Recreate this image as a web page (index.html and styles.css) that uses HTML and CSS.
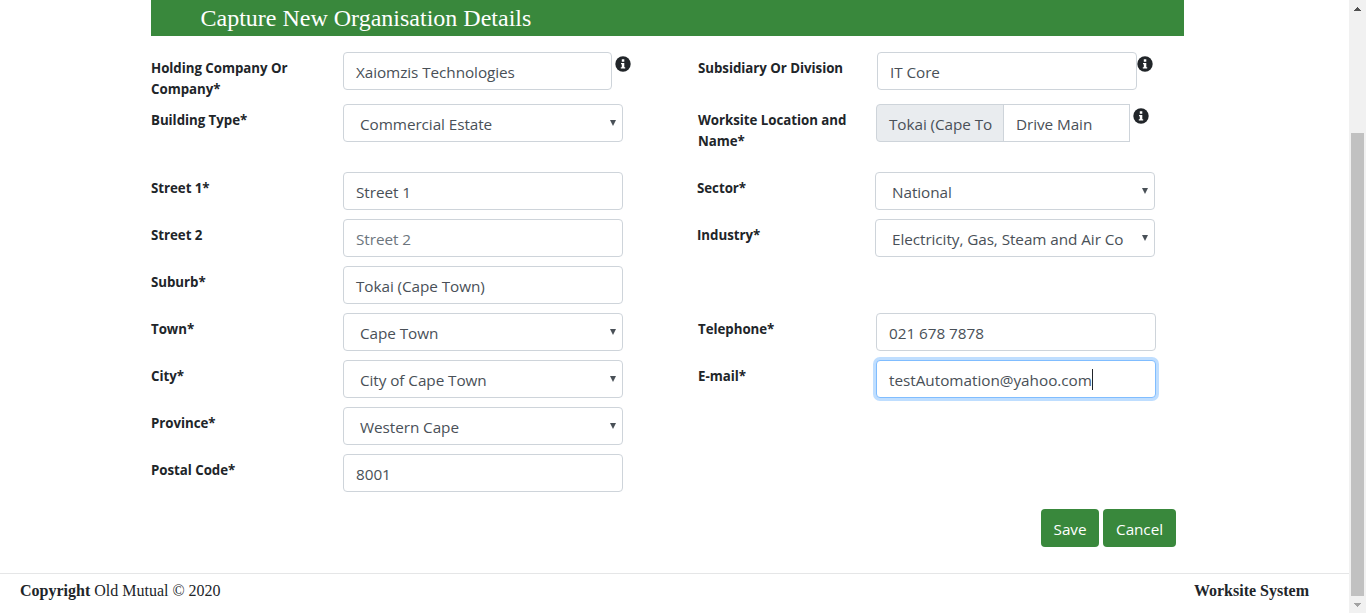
FILE: index.html
```html
<!DOCTYPE html>
<html lang="en">
<head>
<meta charset="utf-8">
<title>Capture New Organisation Details</title>
<link rel="stylesheet" href="styles.css">
</head>
<body>
<svg class="defs" width="0" height="0"><symbol id="info" viewBox="0 0 16 16"><circle cx="8" cy="8" r="7.7" fill="#212529"/><path fill="#fff" d="M6.8 3.3h2.5v2.4H6.8zM6 6.9h3.3v4.3h.9v1.4H5.8v-1.4h1V8.2H6z"/></symbol></svg>
<div class="page">
<main class="content">
<h1 class="title"><span>Capture New Organisation Details</span></h1>
<form class="form">
<label class="label"><span>Holding Company Or</span><br><span>Company*</span></label>
<div class="cell"><div class="field holding"><span>Xaiomzis Technologies</span></div><svg class="info"><use href="#info"/></svg></div>
<label class="label"><span>Subsidiary Or Division</span></label>
<div class="cell sub"><div class="field subsidiary"><span>IT Core</span></div><svg class="info tight"><use href="#info"/></svg></div>

<label class="label"><span>Building Type*</span></label>
<div class="cell"><div class="field select"><span>Commercial Estate</span><i class="arrow"></i></div></div>
<label class="label"><span>Worksite Location and</span><br><span>Name*</span></label>
<div class="cell"><div class="field prefix"><span>Tokai (Cape To</span></div><div class="field suffix"><span>Drive Main</span></div><svg class="info"><use href="#info"/></svg></div>

<label class="label"><span>Street 1*</span></label>
<div class="cell"><div class="field"><span>Street 1</span></div></div>
<label class="label shift"><span>Sector*</span></label>
<div class="cell shift"><div class="field select"><span>National</span><i class="arrow"></i></div></div>

<label class="label"><span>Street 2</span></label>
<div class="cell"><div class="field placeholder"><span>Street 2</span></div></div>
<label class="label shift"><span>Industry*</span></label>
<div class="cell shift"><div class="field select"><span>Electricity, Gas, Steam and Air Co</span><i class="arrow"></i></div></div>

<label class="label start"><span>Suburb*</span></label>
<div class="cell"><div class="field"><span>Tokai (Cape Town)</span></div></div>

<label class="label start"><span>Town*</span></label>
<div class="cell"><div class="field select"><span>Cape Town</span><i class="arrow"></i></div></div>
<label class="label"><span>Telephone*</span></label>
<div class="cell"><div class="field digits"><span>021 678 7878</span></div></div>

<label class="label"><span>City*</span></label>
<div class="cell"><div class="field select"><span>City of Cape Town</span><i class="arrow"></i></div></div>
<label class="label"><span>E-mail*</span></label>
<div class="cell"><div class="field focused"><span>testAutomation@yahoo.com</span><i class="caret"></i></div></div>

<label class="label start"><span>Province*</span></label>
<div class="cell"><div class="field select"><span>Western Cape</span><i class="arrow"></i></div></div>

<label class="label start"><span>Postal Code*</span></label>
<div class="cell"><div class="field digits"><span>8001</span></div></div>
</form>
<div class="actions"><button class="btn save">Save</button><button class="btn cancel">Cancel</button></div>
</main>
<footer class="footer"><span><b>Copyright</b> Old Mutual © 2020</span><b>Worksite System</b></footer>
</div>
<aside class="scrollbar"><svg width="17" height="17"><path fill="#505050" d="M5 11v-1h1V9h1V8h1V7h1v1h1v1h1v1h1v1z"/></svg><div class="thumb"></div><svg width="17" height="17"><path fill="#a3a3a3" d="M5 7h7v1h-1v1h-1v1H9v1H8v-1H7V9H6V8H5z"/></svg></aside>
</body>
</html>
```

FILE: styles.css
```css
* { box-sizing: border-box; }
body { margin: 0; height: 613px; display: flex; overflow: hidden; background: #fff; color: #212529; font-family: "Open Sans", "Noto Sans", sans-serif; }
.defs { display: none; }
.page { width: 1349px; display: flex; flex-direction: column; }
.content { width: 1033px; height: 573px; margin-left: 151px; }
.title { height: 36px; margin: 0; padding-left: 49.5px; background: #39883c; color: #fff; font: 24px/37px "Liberation Serif", serif; }
.form { margin-top: 16px; display: grid; grid-template-columns: 192px 355px 178px 308px; grid-template-rows: 52px 68px repeat(7, 47px); }
.label { padding-top: 6px; font-size: 13.3px; font-weight: 700; line-height: 21px; letter-spacing: -0.04px; white-space: nowrap; }
.start { grid-column: 1; }
.label.shift { margin-left: -1px; }
.cell { display: flex; align-items: flex-start; }
.cell.shift { margin-left: -1px; }
.cell.sub { margin-left: 1px; }
.field { width: 280px; height: 38px; padding: 2px 12px 0; display: flex; align-items: center; border: 1px solid #ced4da; border-radius: 4px; background: #fff; color: #495057; font-size: 15.3px; line-height: 24px; letter-spacing: -0.07px; white-space: nowrap; }
.holding { width: 269px; }
.subsidiary { width: 260px; }
.select { padding-left: 16px; padding-right: 6px; justify-content: space-between; }
.arrow { width: 6px; height: 6px; margin-top: -2px; background: #495057; clip-path: polygon(0 0, 100% 0, 50% 100%); }
.prefix { width: 128px; border-radius: 4px 0 0 4px; background: #e9ecef; }
.suffix { width: 127px; margin-left: -1px; border-radius: 0; }
.placeholder { color: #6c757d; }
.digits { letter-spacing: -0.04px; }
.focused { border-color: #80bdff; box-shadow: 0 0 0 3px #bfdeff; letter-spacing: -0.02px; }
.caret { width: 1px; height: 21px; margin-top: -2px; background: #212529; }
.info { width: 16px; height: 16px; margin: 4px 0 0 2.5px; }
.info.tight { margin-left: 0; }
.actions { margin: 8px 8px 0 0; display: flex; justify-content: flex-end; gap: 4px; }
.btn { height: 38px; padding: 2px 0 0; border: 0; border-radius: 4px; background: #39883c; color: #fff; font: 15.3px/24px "Open Sans", "Noto Sans", sans-serif; letter-spacing: -0.07px; }
.save { width: 58px; }
.cancel { width: 73px; }
.footer { height: 40px; padding: 7px 40px 0 20px; display: flex; justify-content: space-between; border-top: 1px solid #e5e6e7; font: 16px/19px "Liberation Serif", serif; }
.scrollbar { width: 17px; display: flex; flex-direction: column; background: #f1f1f1; }
.thumb { width: 13px; height: 463px; margin: 116px 0 0 2px; background: #c1c1c1; }
```
